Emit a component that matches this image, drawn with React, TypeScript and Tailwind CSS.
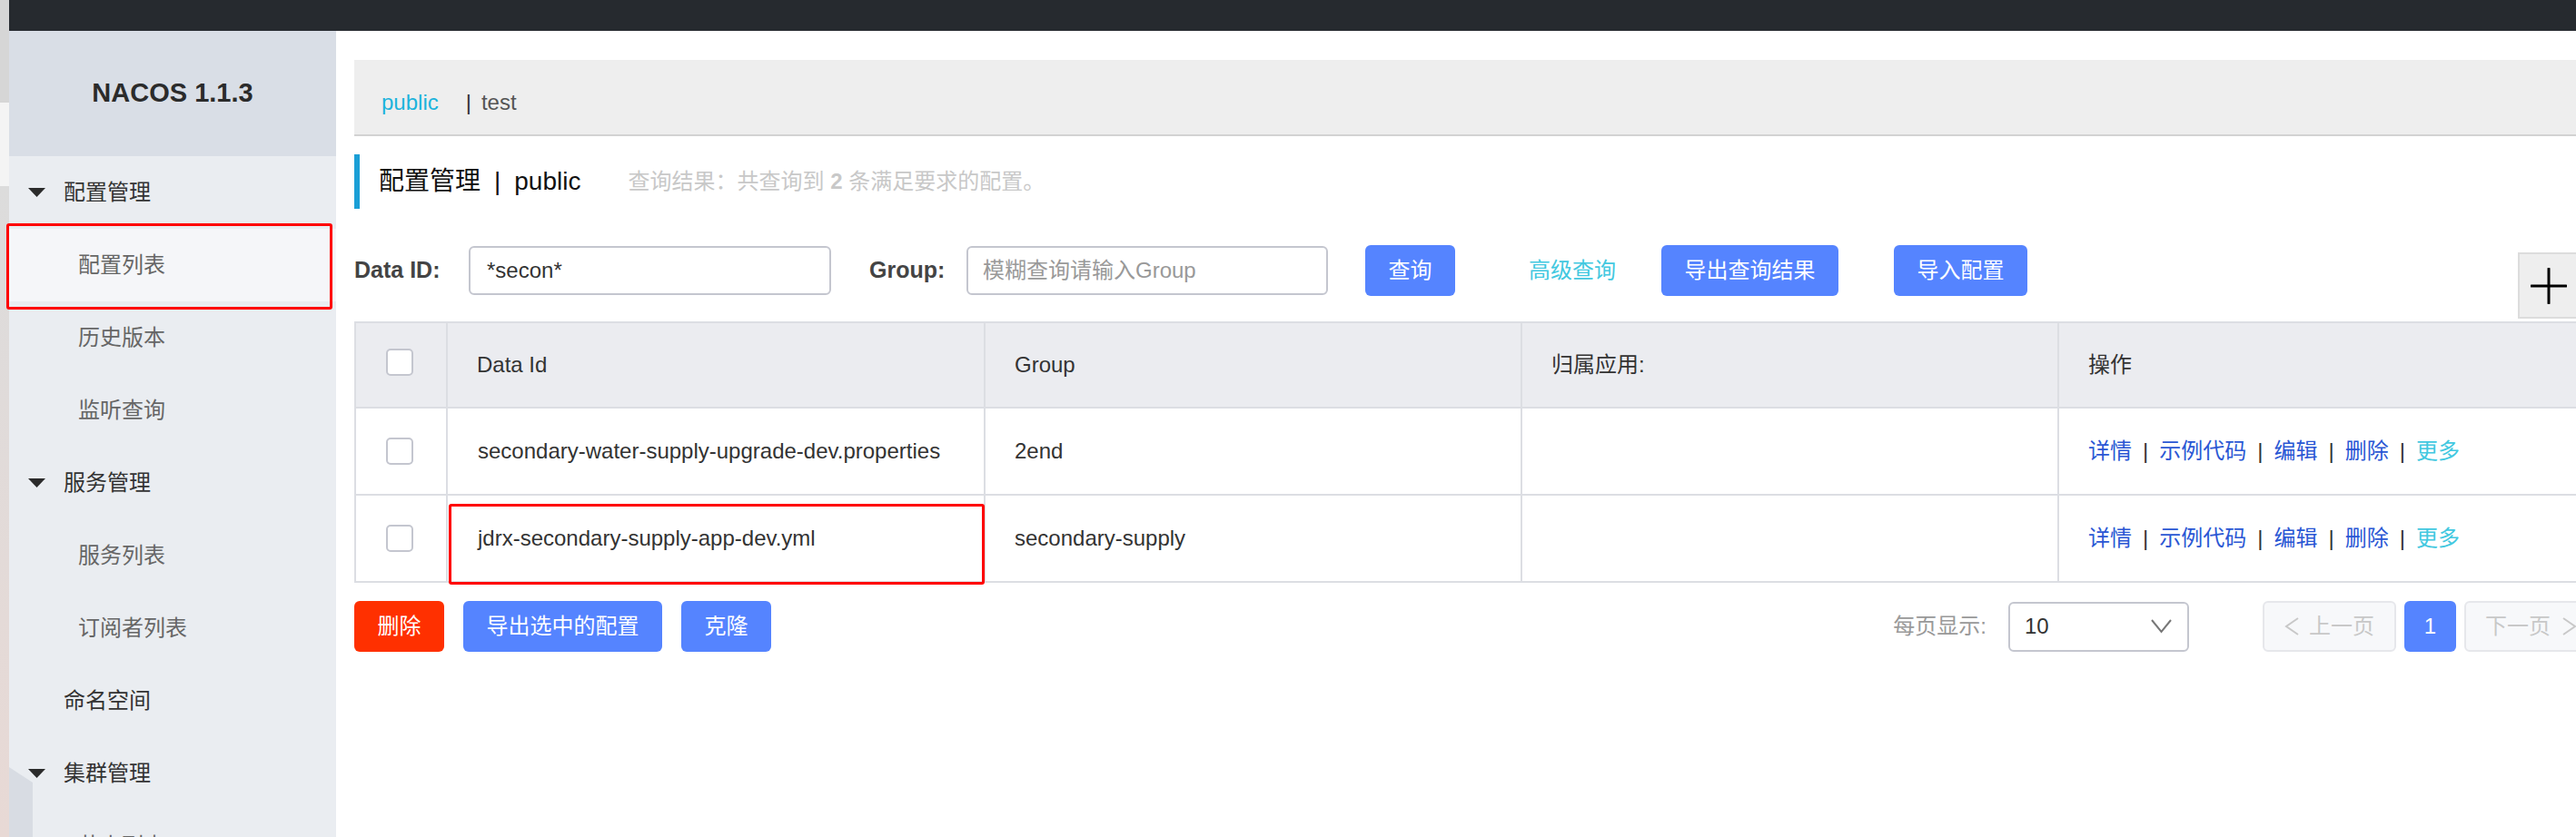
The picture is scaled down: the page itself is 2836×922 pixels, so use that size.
type MenuItem = { label: string; level: 0 | 1; caret?: boolean; active?: boolean };

const menu: MenuItem[] = [
  { label: "配置管理", level: 0, caret: true },
  { label: "配置列表", level: 1, active: true },
  { label: "历史版本", level: 1 },
  { label: "监听查询", level: 1 },
  { label: "服务管理", level: 0, caret: true },
  { label: "服务列表", level: 1 },
  { label: "订阅者列表", level: 1 },
  { label: "命名空间", level: 0 },
  { label: "集群管理", level: 0, caret: true },
  { label: "节点列表", level: 1 },
];

const rows = [
  { dataId: "secondary-water-supply-upgrade-dev.properties", group: "2end" },
  { dataId: "jdrx-secondary-supply-app-dev.yml", group: "secondary-supply" },
];

function Caret() {
  return (
    <svg width="19" height="10" viewBox="0 0 19 10" className="shrink-0">
      <polygon points="0,0 19,0 9.5,10" fill="#2b2b2b" />
    </svg>
  );
}

// thin chevrons used by the select and the pager
function Chevron({ dir, className = "" }: { dir: "left" | "right" | "down"; className?: string }) {
  if (dir === "down") {
    return (
      <svg width="23" height="16" viewBox="0 0 23 16" className={className}>
        <polyline points="1,1 11.5,14 22,1" fill="none" stroke="currentColor" strokeWidth="2" />
      </svg>
    );
  }
  const pts = dir === "left" ? "15,1 2,10 15,19" : "2,1 15,10 2,19";
  return (
    <svg width="17" height="20" viewBox="0 0 17 20" className={className}>
      <polyline points={pts} fill="none" stroke="currentColor" strokeWidth="2" />
    </svg>
  );
}

function Checkbox() {
  return <span className="block w-[30px] h-[30px] rounded-[5px] border-2 border-[#c4c6cf] bg-white" />;
}

function Sidebar() {
  return (
    <aside className="w-[360px] shrink-0 bg-[#eaedf1]">
      <div className="h-[138px] bg-[#d9dee6] flex items-center justify-center">
        <span className="text-[29px] font-bold text-[#2b2b2b]">NACOS 1.1.3</span>
      </div>
      {menu.map((item) => (
        <div
          key={item.label}
          className={`h-[80px] flex items-center text-[24px] ${item.active ? "bg-[#f5f6f9]" : ""} ${
            item.level === 0 ? "pl-[21px] text-[#333]" : "pl-[76px] text-[#666]"
          }`}
        >
          {item.level === 0 && (
            <span className="w-[39px] shrink-0 flex">{item.caret && <Caret />}</span>
          )}
          {item.label}
        </div>
      ))}
    </aside>
  );
}

function Button({ children, danger, className = "" }: { children: React.ReactNode; danger?: boolean; className?: string }) {
  return (
    <button
      className={`h-[56px] px-[25px] rounded-[6px] text-[24px] text-white shrink-0 ${
        danger ? "bg-[#ff3000]" : "bg-[#5584ff]"
      } ${className}`}
    >
      {children}
    </button>
  );
}

function Cell({ children, className = "" }: { children?: React.ReactNode; className?: string }) {
  return (
    <div className={`border-r-2 border-[#dcdee3] flex items-center pl-[32px] ${className}`}>{children}</div>
  );
}

function Operations() {
  const links = ["详情", "示例代码", "编辑", "删除"];
  return (
    <div className="flex items-center text-[24px]">
      {links.map((l) => (
        <span key={l} className="flex items-center">
          <span className="text-[#2a57d4]">{l}</span>
          <span className="px-[12px] text-[#333]">|</span>
        </span>
      ))}
      <span className="text-[#42c8e0]">更多</span>
    </div>
  );
}

function ConfigTable() {
  const grid = "grid grid-cols-[101px_592px_591px_591px_1fr]";
  return (
    <div className="mt-[28px] border-t-2 border-l-2 border-[#dcdee3] text-[24px] text-[#333]">
      <div className={`${grid} h-[94px] bg-[#ebecf0] border-b-2 border-[#dcdee3]`}>
        <div className="border-r-2 border-[#dcdee3] flex items-center justify-center pr-[3px] pb-[6px]">
          <Checkbox />
        </div>
        <Cell>Data Id</Cell>
        <Cell>Group</Cell>
        <Cell>归属应用:</Cell>
        <Cell>操作</Cell>
      </div>
      {rows.map((r) => (
        <div key={r.dataId} className={`${grid} h-[96px] bg-white border-b-2 border-[#dcdee3]`}>
          <div className="border-r-2 border-[#dcdee3] flex items-center justify-center pr-[3px]">
            <Checkbox />
          </div>
          <Cell className="pl-[33px]">{r.dataId}</Cell>
          <Cell className="pl-[31px]">{r.group}</Cell>
          <Cell />
          <Cell>
            <Operations />
          </Cell>
        </div>
      ))}
    </div>
  );
}

function Pagination() {
  return (
    <div className="ml-auto flex items-center text-[24px]">
      <span className="text-[#999] mr-[24px]">每页显示:</span>
      <div className="w-[199px] h-[55px] border-2 border-[#c4c6cf] rounded-[6px] flex items-center justify-between pl-[16px] pr-[17px] text-[#333]">
        <span>10</span>
        <Chevron dir="down" className="text-[#777]" />
      </div>
      <div className="ml-[81px] w-[147px] h-[56px] bg-[#f7f8fa] border-2 border-[#e6e7eb] rounded-[6px] flex items-center justify-center gap-[10px] text-[#c8c8c8]">
        <Chevron dir="left" />
        <span>上一页</span>
      </div>
      <div className="ml-[9px] w-[57px] h-[56px] bg-[#5584ff] rounded-[6px] flex items-center justify-center text-white">
        1
      </div>
      <div className="ml-[9px] w-[147px] h-[56px] bg-[#f7f8fa] border-2 border-[#e6e7eb] rounded-[6px] flex items-center justify-center gap-[12px] text-[#c8c8c8]">
        <span>下一页</span>
        <Chevron dir="right" />
      </div>
    </div>
  );
}

function Main() {
  return (
    <main className="w-[2490px] shrink-0 bg-white pl-[20px]">
      <div className="w-[2470px]">
        {/* namespace bar */}
        <div className="mt-[32px] h-[84px] bg-[#eeeeee] border-b-2 border-[#d2d2d2] flex items-center pt-[12px] pl-[30px] text-[24px]">
          <span className="text-[#1cb3dc]">public</span>
          <span className="ml-[30px] text-[#333]">|</span>
          <span className="ml-[11px] text-[#555]">test</span>
        </div>

        {/* title */}
        <div className="mt-[20px] h-[60px] border-l-[6px] border-[#1a9fd6] flex items-center pl-[21px]">
          <span className="text-[28px] text-[#111]">配置管理</span>
          <span className="text-[28px] text-[#111] px-[15px]">|</span>
          <span className="text-[28px] text-[#111]">public</span>
          <span className="ml-[52px] text-[24px] text-[#c8c8c8]">
            查询结果：共查询到 <b className="font-bold">2</b> 条满足要求的配置。
          </span>
        </div>

        {/* query row */}
        <div className="mt-[40px] h-[56px] flex items-start">
          <div className="h-[56px] flex items-center">
            <span className="w-[126px] shrink-0 text-[25px] font-bold text-[#444]">Data ID:</span>
            <div className="w-[399px] h-[54px] border-2 border-[#c4c6cf] rounded-[6px] flex items-center pl-[18px] text-[24px] text-[#333]">
              *secon*
            </div>
            <span className="ml-[42px] w-[107px] shrink-0 text-[25px] font-bold text-[#444]">Group:</span>
            <div className="w-[398px] h-[54px] border-2 border-[#c4c6cf] rounded-[6px] flex items-center pl-[16px] text-[24px] text-[#999]">
              模糊查询请输入Group
            </div>
            <Button className="ml-[41px] w-[99px]">查询</Button>
            <span className="ml-[81px] text-[24px] text-[#42c8e0]">高级查询</span>
            <Button className="ml-[50px] w-[195px]">导出查询结果</Button>
            <Button className="ml-[61px] w-[147px]">导入配置</Button>
          </div>
          <div className="ml-auto mr-[20px] mt-[8px] w-[68px] h-[73px] shrink-0 bg-[#eeeeee] border-2 border-[#dcdcdc] flex items-center justify-center">
            <svg width="40" height="40" viewBox="0 0 40 40">
              <path d="M20 1v38M1 20h38" stroke="#000" strokeWidth="3" strokeLinecap="round" />
            </svg>
          </div>
        </div>

        <ConfigTable />

        {/* bottom actions */}
        <div className="mt-[20px] h-[56px] flex items-center">
          <Button danger className="w-[99px]">删除</Button>
          <Button className="ml-[21px] w-[219px]">导出选中的配置</Button>
          <Button className="ml-[21px] w-[99px]">克隆</Button>
          <Pagination />
        </div>
      </div>
    </main>
  );
}

export default function App() {
  return (
    <div className="relative flex w-[2836px] h-[922px] overflow-hidden bg-white font-['Liberation_Sans','Noto_Sans_CJK_SC',sans-serif]">
      {/* edge of the window behind */}
      <div className="w-[10px] shrink-0 flex flex-col">
        <div className="h-[113px] bg-[#d6d6d6]" />
        <div className="h-[92px] bg-[#f4f4f4]" />
        <div className="flex-1 bg-gradient-to-b from-[#dcdcdc] to-[#e8d9d5]" />
      </div>

      <div className="flex-1 flex flex-col">
        <div className="h-[34px] shrink-0 bg-[#262a2f]" />
        <div className="flex flex-1">
          <Sidebar />
          <Main />
        </div>
      </div>

      <div className="absolute left-[10px] top-[845px] w-[26px] h-[77px] bg-[#d8dce3] [clip-path:polygon(0_0,100%_22%,100%_100%,0_100%)]" />

      {/* annotation boxes */}
      <div className="absolute left-[7px] top-[246px] w-[359px] h-[95px] border-[3px] border-[#ff0000] rounded-[3px]" />
      <div className="absolute left-[494px] top-[555px] w-[590px] h-[89px] border-[3px] border-[#ff0000] rounded-[3px]" />
    </div>
  );
}
